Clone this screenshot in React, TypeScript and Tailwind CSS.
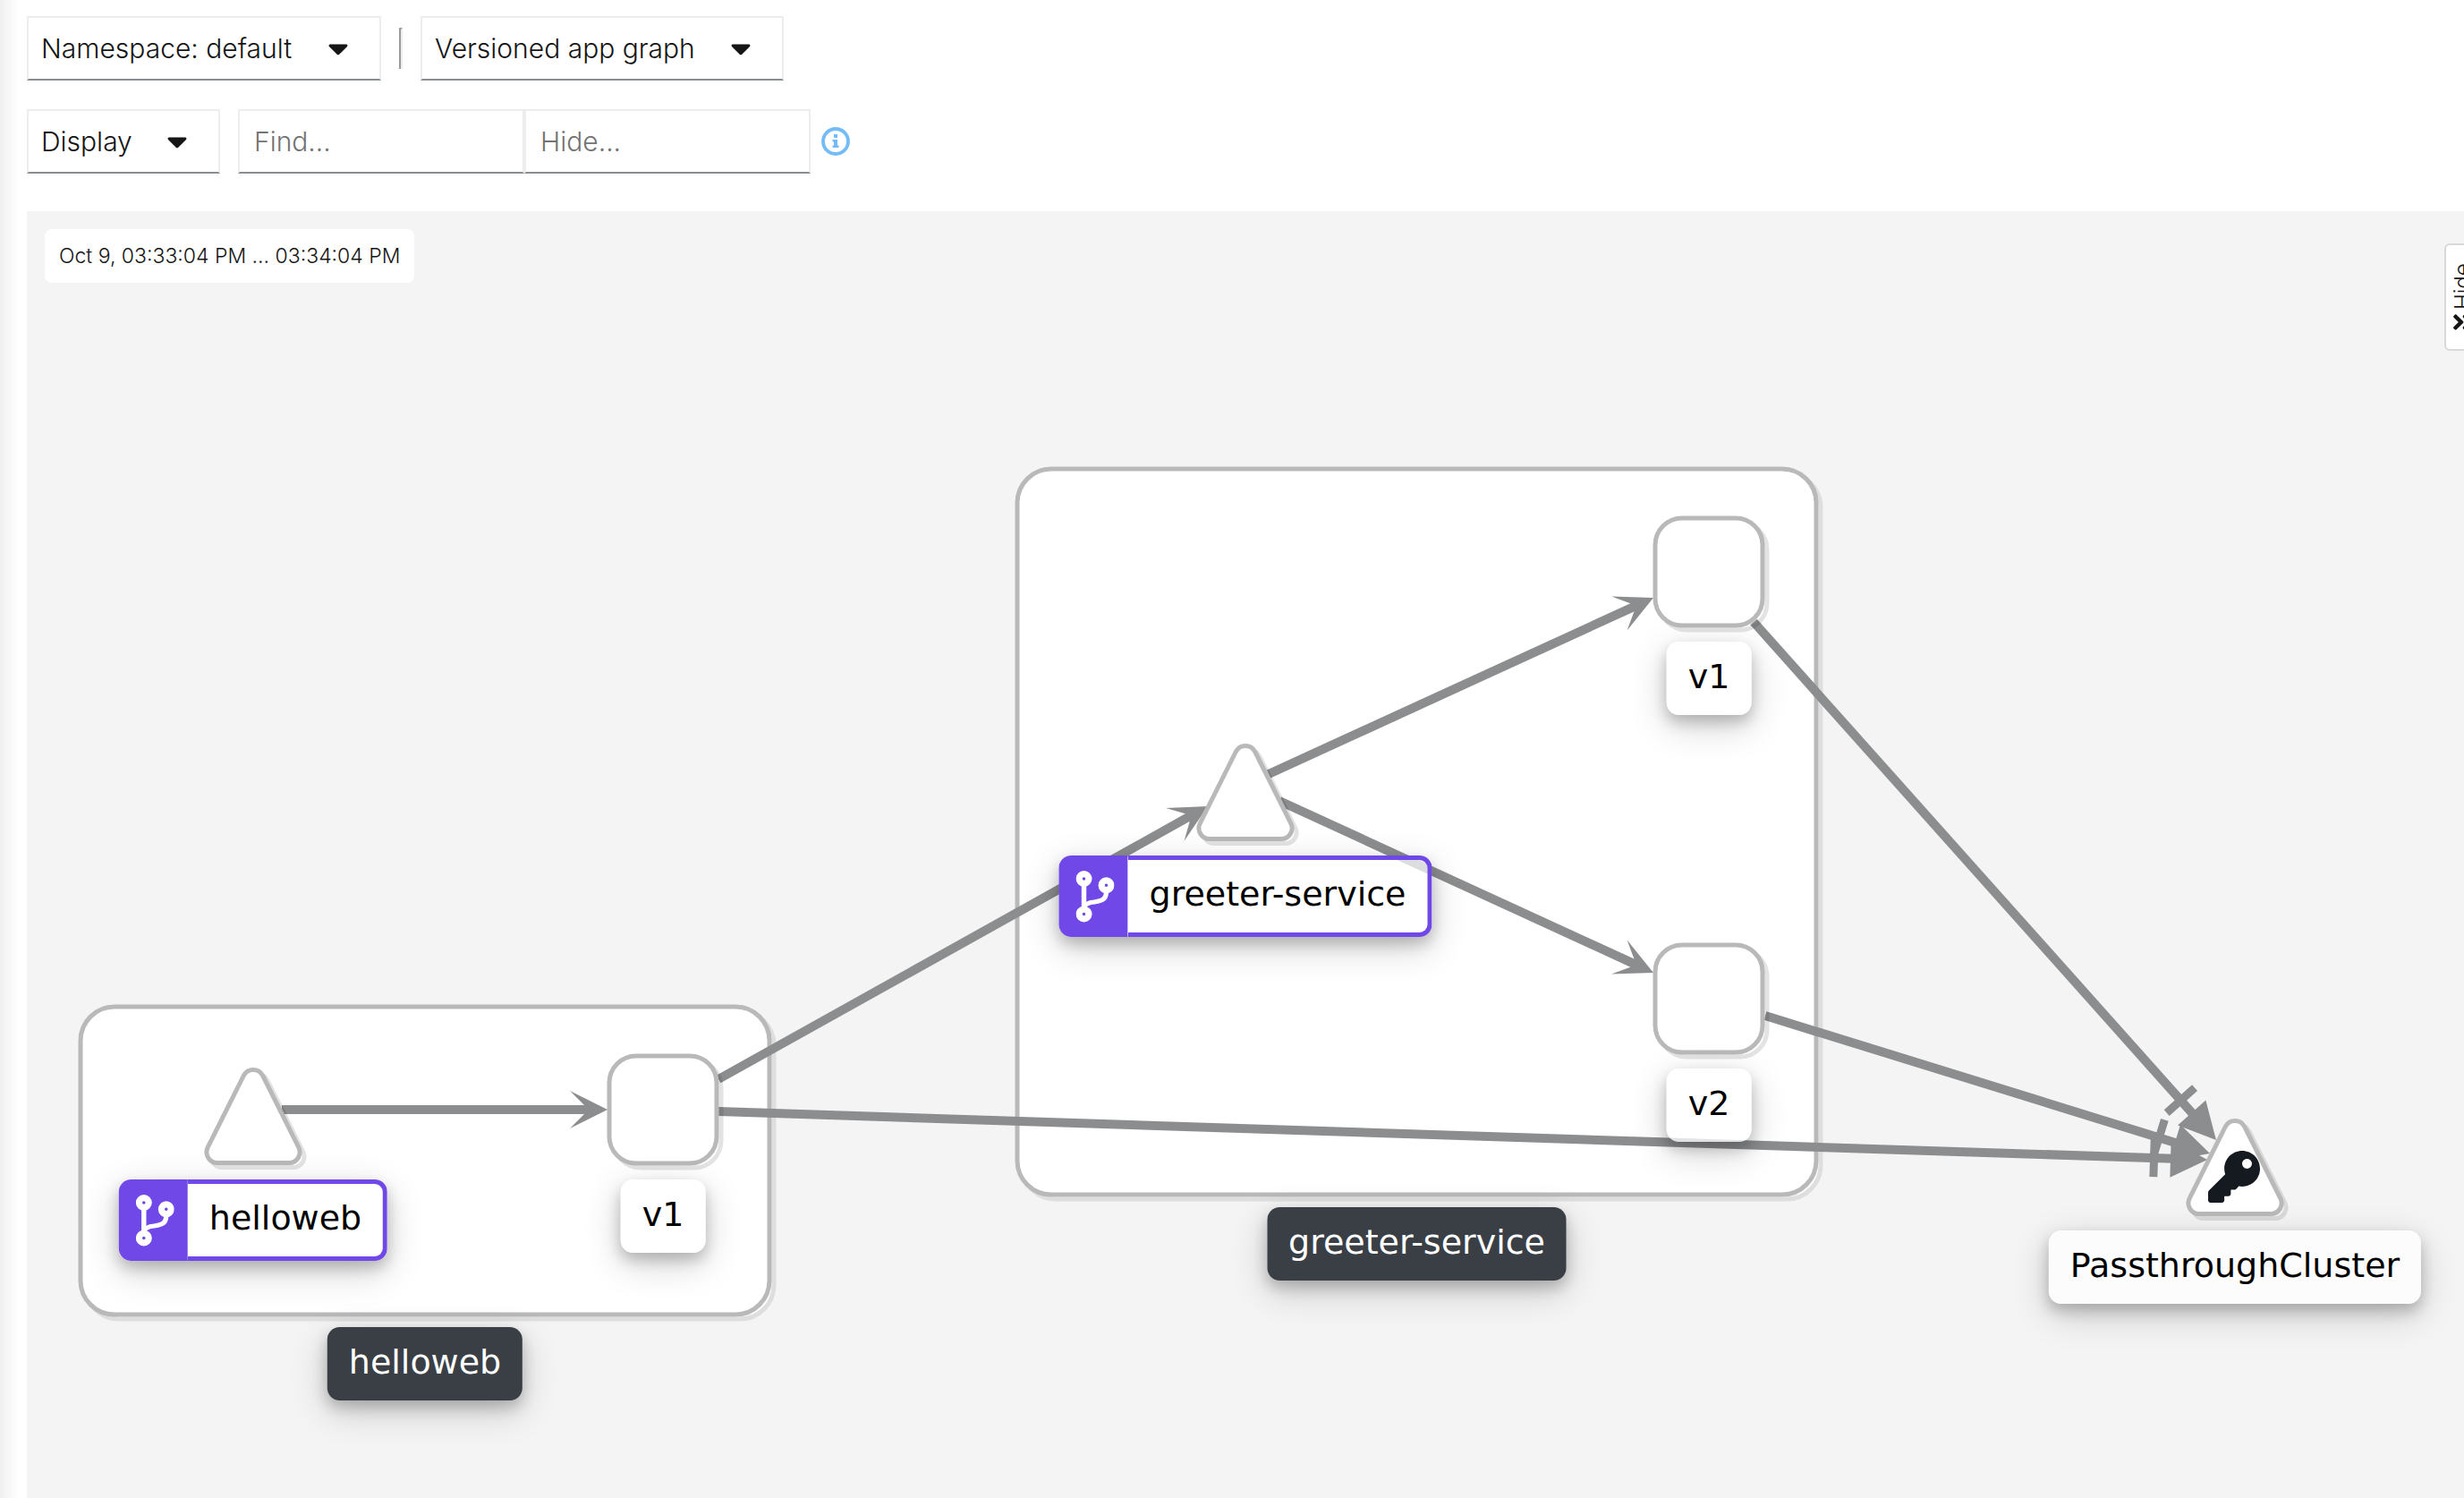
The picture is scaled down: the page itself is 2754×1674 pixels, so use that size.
import React from "react";
import { FaAngleDoubleDown, FaCaretDown, FaKey } from "react-icons/fa";

type Point = { x: number; y: number };
type Node = Point & { id: string; shape: "triangle" | "square"; label: string; routed?: boolean; locked?: boolean };
type Group = Point & { label: string; width: number; height: number };
type Edge = { from: Point; to: Point; head: "vee" | "cross" };

const EDGE = "#8b8d8f";
const OUTLINE = "#b9b9b9";
const TRIANGLE =
  "M-10.7 -38A12 12 0 0 1 10.7 -38L50.8 42.2A12 12 0 0 1 40.1 59.5H-40.1A12 12 0 0 1 -50.8 42.2Z";

const groups: Group[] = [
  { label: "helloweb", x: 60, y: 889, width: 770, height: 344 },
  { label: "greeter-service", x: 1107, y: 288, width: 893, height: 811 },
];

const nodes: Node[] = [
  { id: "helloweb", shape: "triangle", label: "helloweb", x: 253, y: 1004, routed: true },
  { id: "helloweb-v1", shape: "square", label: "v1", x: 711, y: 1004 },
  { id: "greeter", shape: "triangle", label: "greeter-service", x: 1362, y: 642, routed: true },
  { id: "greeter-v1", shape: "square", label: "v1", x: 1880, y: 403 },
  { id: "greeter-v2", shape: "square", label: "v2", x: 1880, y: 880 },
  { id: "passthrough", shape: "triangle", label: "PassthroughCluster", x: 2468, y: 1061, locked: true },
];

const edges: Edge[] = [
  { from: { x: 285, y: 1004 }, to: { x: 649, y: 1004 }, head: "vee" },
  { from: { x: 773, y: 970 }, to: { x: 1320, y: 665 }, head: "vee" },
  { from: { x: 1388, y: 629 }, to: { x: 1818, y: 432 }, head: "vee" },
  { from: { x: 1400, y: 659 }, to: { x: 1818, y: 851 }, head: "vee" },
  { from: { x: 773, y: 1006 }, to: { x: 2437, y: 1060 }, head: "cross" },
  { from: { x: 1943, y: 899 }, to: { x: 2440, y: 1053 }, head: "cross" },
  { from: { x: 1930, y: 459 }, to: { x: 2447, y: 1038 }, head: "cross" },
];

function EdgeLine({ from, to, head }: Edge) {
  const dx = to.x - from.x;
  const dy = to.y - from.y;
  const length = Math.hypot(dx, dy);
  const angle = (Math.atan2(dy, dx) * 180) / Math.PI;
  return (
    <g transform={`translate(${to.x} ${to.y}) rotate(${angle})`} fill={EDGE}>
      <rect x={-length} y={-5} width={length - (head === "vee" ? 20 : 38)} height={10} />
      {head === "vee" ? (
        <path d="M0 0L-42 -21L-21 0L-42 21Z" />
      ) : (
        <path d="M0 0L-41 -21V21ZM-64 -21H-55V21H-64Z" />
      )}
    </g>
  );
}

function NodeShape({ x, y, shape, locked }: Node) {
  return (
    <g transform={`translate(${x} ${y})`} strokeWidth={5} fill="#fff">
      {shape === "triangle" ? (
        <>
          <path d={TRIANGLE} transform="translate(5 5)" stroke="#000" strokeOpacity={0.11} fill="none" />
          <path d={TRIANGLE} stroke={OUTLINE} />
        </>
      ) : (
        <>
          <rect x={-55} y={-55} width={120} height={120} rx={30} stroke="#000" strokeOpacity={0.11} fill="none" />
          <rect x={-60} y={-60} width={120} height={120} rx={30} stroke={OUTLINE} />
        </>
      )}
      {locked && <FaKey x={-30} y={-11} size={58} fill="#151a20" stroke="none" />}
    </g>
  );
}

function GroupShape({ x, y, width, height }: Group) {
  return (
    <g strokeWidth={5} fill="#fff">
      <rect x={x + 5} y={y + 5} width={width} height={height} rx={38} stroke="#dedede" />
      <rect x={x} y={y} width={width} height={height} rx={38} stroke={OUTLINE} />
    </g>
  );
}

function BranchIcon() {
  return (
    <svg width="43" height="58" viewBox="0 0 43 58" fill="none" stroke="#fff" aria-hidden="true">
      <circle cx="9" cy="9" r="5.4" strokeWidth="7.2" />
      <circle cx="9" cy="48.5" r="5.4" strokeWidth="7.2" />
      <circle cx="34" cy="16.3" r="5.4" strokeWidth="7.2" />
      <path d="M9 16V42" strokeWidth="5.4" />
      <path d="M34 24C33.5 34 26 34 20 35C14 35.8 11 37 9 40" strokeWidth="5.2" />
    </svg>
  );
}

function NodeLabel({ x, y, label, routed }: Node) {
  return (
    <div
      className="absolute flex -translate-x-1/2 whitespace-nowrap rounded-[14px] text-[38px] leading-[44px] text-black shadow-[0_8px_16px_rgba(0,0,0,0.2),0_12px_40px_rgba(0,0,0,0.19)]"
      style={{ left: x, top: y + 78 }}
    >
      {routed ? (
        <>
          <span className="flex w-[77px] items-center rounded-l-[14px] bg-[#7048e8] pl-[19px]">
            <BranchIcon />
          </span>
          <span className="rounded-r-[14px] border-y-[5px] border-r-[5px] border-[#7048e8] bg-white/70 px-6 pt-4 pb-[21px]">
            {label}
          </span>
        </>
      ) : (
        <span className="rounded-[14px] bg-white/75 px-6 pt-[17px] pb-[21px]">{label}</span>
      )}
    </div>
  );
}

function GroupLabel({ x, y, width, height, label }: Group) {
  return (
    <div
      className="absolute -translate-x-1/2 whitespace-nowrap rounded-[14px] bg-[#3a3f46] px-6 pt-[17px] pb-[21px] text-[38px] leading-[44px] text-white shadow-[0_8px_16px_rgba(0,0,0,0.2),0_12px_40px_rgba(0,0,0,0.19)]"
      style={{ left: x + width / 2, top: y + height + 14 }}
    >
      {label}
    </div>
  );
}

function Dropdown({ label, value, className }: { label: string; value: string; className: string }) {
  return (
    <div className={`relative ${className}`}>
      <select
        aria-label={label}
        defaultValue={value}
        className="h-[72px] w-full appearance-none border-2 border-[#ededed] border-b-[#8a8d90] bg-white pr-14 pl-[14px] text-[30px] font-light text-[#151515]"
      >
        <option>{value}</option>
      </select>
      <FaCaretDown className="pointer-events-none absolute top-[18px] right-[30px] size-9 text-[#151515]" />
    </div>
  );
}

const field =
  "h-[72px] w-full min-w-0 border-2 border-[#ededed] border-b-[#8a8d90] bg-white px-4 text-[30px] font-light text-[#151515] placeholder:text-[#737373]";

export default function App() {
  return (
    <div className="flex min-h-screen overflow-hidden bg-white font-['Inter',sans-serif] text-[#151515]">
      <div className="w-[30px] shrink-0 bg-linear-to-r from-[#f0f0f0] to-white to-70%" />
      <main className="flex min-w-0 flex-1 flex-col">
        <div className="flex items-center pt-[18px]">
          <Dropdown label="Namespace" value="Namespace: default" className="w-[396px]" />
          <div className="mx-5 h-[46px] w-1 border-t-2 border-r-2 border-l-2 border-[#ededed] border-t-[#9a9a9a] border-l-[#9a9a9a]" />
          <Dropdown label="Graph type" value="Versioned app graph" className="w-[406px]" />
        </div>
        <div className="flex items-center pt-8 pb-[42px]">
          <button
            type="button"
            className="flex h-[72px] w-[216px] items-center justify-between border-2 border-[#ededed] border-b-[#8a8d90] pr-7 pl-[14px] text-[30px] font-light"
          >
            Display
            <FaCaretDown className="size-9" />
          </button>
          <div className="ml-5 flex w-[640px]">
            <input aria-label="Find" placeholder="Find..." className={field} />
            <input aria-label="Hide" placeholder="Hide..." className={field} />
          </div>
          <button type="button" aria-label="Find and hide help" className="ml-3">
            <svg width="32" height="32" viewBox="0 0 32 32" aria-hidden="true">
              <circle cx="16" cy="16" r="14" fill="none" stroke="#73bcf7" strokeWidth="3.8" />
              <path d="M14 8H18V12H14ZM12.5 14H18V20.5H19.5V23H12.5V20.5H14V16.5H12.5Z" fill="#73bcf7" />
            </svg>
          </button>
        </div>
        <section aria-label="Service graph" className="relative flex-1 overflow-hidden bg-[#f4f4f4]">
          <div className="font-['DejaVu_Sans',sans-serif]">
            <svg className="absolute inset-0 size-full" aria-hidden="true">
              {groups.map((g) => (
                <GroupShape key={g.label} {...g} />
              ))}
              {edges.map((e, i) => (
                <EdgeLine key={i} {...e} />
              ))}
              {nodes.map((n) => (
                <NodeShape key={n.id} {...n} />
              ))}
            </svg>
            {groups.map((g) => (
              <GroupLabel key={g.label} {...g} />
            ))}
            {nodes.map((n) => (
              <NodeLabel key={n.id} {...n} />
            ))}
          </div>
          <div className="absolute top-5 left-5 rounded-lg bg-white px-4 py-[14px] text-[23px] leading-8 font-light">
            Oct 9, 03:33:04 PM ... 03:34:04 PM
          </div>
          <button
            type="button"
            className="absolute top-9 -right-5 flex h-[120px] w-[42px] rotate-180 items-center rounded-md border-2 border-[#d9d9d9] bg-white pt-4 text-[24px] leading-7 font-light [writing-mode:vertical-rl]"
          >
            <FaAngleDoubleDown className="size-7 shrink-0 rotate-90" />
            Hide
          </button>
        </section>
      </main>
    </div>
  );
}
